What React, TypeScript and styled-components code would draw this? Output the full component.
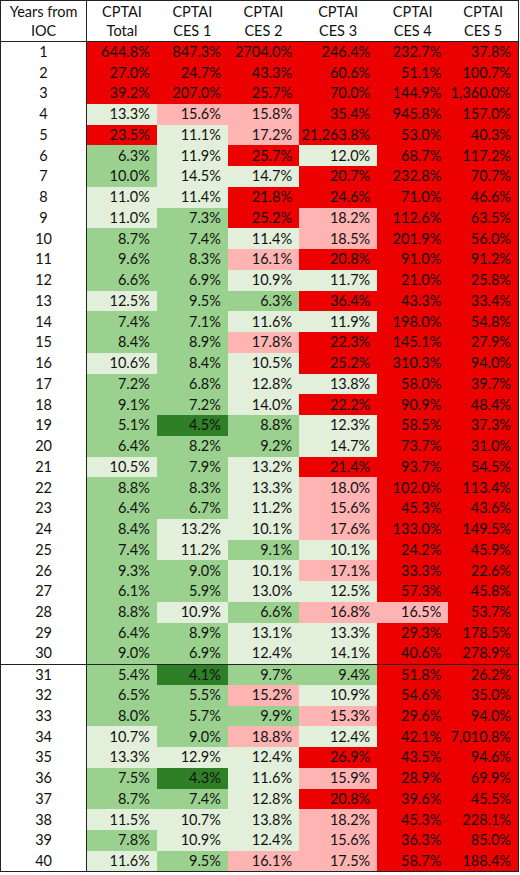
import React from 'react';
import styled, { createGlobalStyle } from 'styled-components';

type Tone = 'R' | 'r' | 'g' | 'G' | 'D';

const tones: Record<Tone, string> = {
  R: '#ec0000',
  r: '#ffb4b4',
  g: '#e2efda',
  G: '#9bd18e',
  D: '#2f7f27',
};

const GlobalStyle = createGlobalStyle`
  body {
    margin: 0;
    background: #fff;
  }
`;

const Table = styled.table`
  border-collapse: collapse;
  table-layout: fixed;
  width: 519px;
  font-family: Lato, 'Liberation Sans', sans-serif;
  font-size: 14.5px;
  color: #111;
  border: 1px solid #222;
`;

const HeadCell = styled.th<{ $first?: boolean }>`
  height: 40px;
  padding: 0;
  font-weight: 400;
  line-height: 19px;
  text-align: center;
  vertical-align: middle;
  border-bottom: 1px solid #222;
  border-right: ${(p) => (p.$first ? '1px solid #222' : 'none')};
`;

const Row = styled.tr<{ $split?: boolean }>`
  height: 20.75px;
  border-top: ${(p) => (p.$split ? '1px solid #222' : 'none')};
`;

const YearCell = styled.td`
  padding: 0;
  text-align: center;
  border-right: 1px solid #222;
  line-height: 20px;
`;

const ValueCell = styled.td<{ $tone: Tone }>`
  padding: 0 7px 0 0;
  text-align: right;
  line-height: 20px;
  background: ${(p) => tones[p.$tone]};
  color: #111;
`;

const widths = [86, 70, 71, 71, 78, 71, 70];

const headers = [
  ['Years from', 'IOC'],
  ['CPTAI', 'Total'],
  ['CPTAI', 'CES 1'],
  ['CPTAI', 'CES 2'],
  ['CPTAI', 'CES 3'],
  ['CPTAI', 'CES 4'],
  ['CPTAI', 'CES 5'],
];

const raw = `644.8 R|847.3 R|2704.0 R|246.4 R|232.7 R|37.8 R
27.0 R|24.7 R|43.3 R|60.6 R|51.1 R|100.7 R
39.2 R|207.0 R|25.7 R|70.0 R|144.9 R|1,360.0 R
13.3 g|15.6 r|15.8 r|35.4 R|945.8 R|157.0 R
23.5 R|11.1 g|17.2 r|21,263.8 R|53.0 R|40.3 R
6.3 G|11.9 g|25.7 R|12.0 g|68.7 R|117.2 R
10.0 G|14.5 g|14.7 g|20.7 R|232.8 R|70.7 R
11.0 g|11.4 g|21.8 R|24.6 R|71.0 R|46.6 R
11.0 g|7.3 G|25.2 R|18.2 r|112.6 R|63.5 R
8.7 G|7.4 G|11.4 g|18.5 r|201.9 R|56.0 R
9.6 G|8.3 G|16.1 r|20.8 R|91.0 R|91.2 R
6.6 G|6.9 G|10.9 g|11.7 g|21.0 R|25.8 R
12.5 g|9.5 G|6.3 G|36.4 R|43.3 R|33.4 R
7.4 G|7.1 G|11.6 g|11.9 g|198.0 R|54.8 R
8.4 G|8.9 G|17.8 r|22.3 R|145.1 R|27.9 R
10.6 g|8.4 G|10.5 g|25.2 R|310.3 R|94.0 R
7.2 G|6.8 G|12.8 g|13.8 g|58.0 R|39.7 R
9.1 G|7.2 G|14.0 g|22.2 R|90.9 R|48.4 R
5.1 G|4.5 D|8.8 G|12.3 g|58.5 R|37.3 R
6.4 G|8.2 G|9.2 G|14.7 g|73.7 R|31.0 R
10.5 g|7.9 G|13.2 g|21.4 R|93.7 R|54.5 R
8.8 G|8.3 G|13.3 g|18.0 r|102.0 R|113.4 R
6.4 G|6.7 G|11.2 g|15.6 r|45.3 R|43.6 R
8.4 G|13.2 g|10.1 g|17.6 r|133.0 R|149.5 R
7.4 G|11.2 g|9.1 G|10.1 g|24.2 R|45.9 R
9.3 G|9.0 G|10.1 g|17.1 r|33.3 R|22.6 R
6.1 G|5.9 G|13.0 g|12.5 g|57.3 R|45.8 R
8.8 G|10.9 g|6.6 G|16.8 r|16.5 r|53.7 R
6.4 G|8.9 G|13.1 g|13.3 g|29.3 R|178.5 R
9.0 G|6.9 G|12.4 g|14.1 g|40.6 R|278.9 R
5.4 G|4.1 D|9.7 G|9.4 G|51.8 R|26.2 R
6.5 G|5.5 G|15.2 r|10.9 g|54.6 R|35.0 R
8.0 G|5.7 G|9.9 G|15.3 r|29.6 R|94.0 R
10.7 g|9.0 G|18.8 r|12.4 g|42.1 R|7,010.8 R
13.3 g|12.9 g|12.4 g|26.9 R|43.5 R|94.6 R
7.5 G|4.3 D|11.6 g|15.9 r|28.9 R|69.9 R
8.7 G|7.4 G|12.8 g|20.8 R|39.6 R|45.5 R
11.5 g|10.7 g|13.8 g|18.2 r|45.3 R|228.1 R
7.8 G|10.9 g|12.4 g|15.6 r|36.3 R|85.0 R
11.6 g|9.5 G|16.1 r|17.5 r|58.7 R|188.4 R`;

const rows = raw.split('\n').map((line) =>
  line.split('|').map((cell) => {
    const [value, tone] = cell.split(' ');
    return { value: `${value}%`, tone: tone as Tone };
  }),
);

const App = function () {
  return (
    <>
      <GlobalStyle />
      <Table>
        <colgroup>
          {widths.map((w, i) => (
            <col key={i} style={{ width: w }} />
          ))}
        </colgroup>
        <thead>
          <tr>
            {headers.map(([a, b], i) => (
              <HeadCell key={i} $first={i === 0}>
                {a}
                <br />
                {b}
              </HeadCell>
            ))}
          </tr>
        </thead>
        <tbody>
          {rows.map((cells, i) => (
            <Row key={i} $split={i === 30}>
              <YearCell>{i + 1}</YearCell>
              {cells.map((c, j) => (
                <ValueCell key={j} $tone={c.tone}>
                  {c.value}
                </ValueCell>
              ))}
            </Row>
          ))}
        </tbody>
      </Table>
    </>
  );
};

export default App;
